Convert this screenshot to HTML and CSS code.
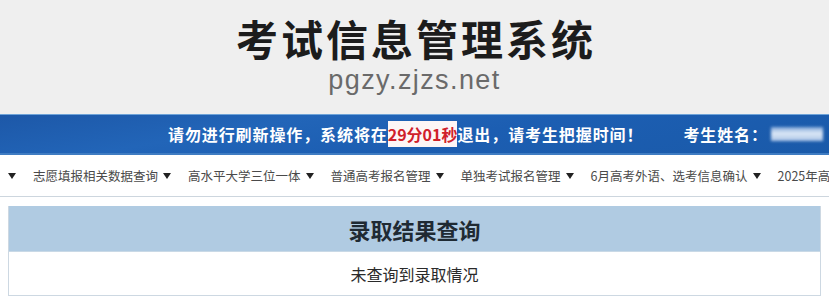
FILE: index.html
```html
<!DOCTYPE html>
<html lang="zh-CN">
<head>
<meta charset="utf-8">
<title>考试信息管理系统</title>
<link rel="stylesheet" href="styles.css">
</head>
<body>
<header class="top">
  <h1 class="title">考试信息管理系统</h1>
  <div class="domain">pgzy.zjzs.net</div>
</header>
<div class="bar">
  <div class="msg">请勿进行刷新操作，系统将在<span class="count">29分01秒</span>退出，请考生把握时间！</div>
  <div class="user">考生姓名：<span class="name"></span></div>
</div>
<nav class="nav">
  <span class="item"><span class="tri"></span></span>
  <span class="item">志愿填报相关数据查询<span class="tri"></span></span>
  <span class="item">高水平大学三位一体<span class="tri"></span></span>
  <span class="item">普通高考报名管理<span class="tri"></span></span>
  <span class="item">单独考试报名管理<span class="tri"></span></span>
  <span class="item">6月高考外语、选考信息确认<span class="tri"></span></span>
  <span class="item">2025年高考成绩查询<span class="tri"></span></span>
</nav>
<section class="result">
  <div class="result-head">录取结果查询</div>
  <div class="result-body">未查询到录取情况</div>
</section>
</body>
</html>
```
FILE: styles.css
```css
html, body {
  margin: 0;
  padding: 0;
}
body {
  background: #ffffff;
  font-family: "Noto Sans CJK SC", "Noto Sans", sans-serif;
  color: #333;
  width: 829px;
  overflow: hidden;
}
.top {
  background: #efefef;
  height: 114px;
  display: flex;
  flex-direction: column;
  align-items: center;
  box-sizing: border-box;
  padding-top: 14px;
}
.title {
  margin: 0;
  font-size: 42px;
  line-height: 48px;
  font-weight: 700;
  letter-spacing: 3px;
  color: #1c1c1c;
  padding-left: 3px;
}
.domain {
  font-family: "Liberation Sans", Arial, sans-serif;
  font-size: 27px;
  line-height: 32px;
  letter-spacing: 1.4px;
  color: #6a6a6a;
  margin-top: 2px;
}
.bar {
  height: 41px;
  box-sizing: border-box;
  background: linear-gradient(170deg, #1d58a8 0%, #2265b8 30%, #1c5eb2 55%, #1a5aa9 100%);
  border-top: 1px solid #6ea3d8;
  border-bottom: 2px solid #3f7cc2;
  display: flex;
  align-items: center;
  padding-left: 168px;
  gap: 40px;
  color: #fff;
  font-weight: 700;
  font-size: 16px;
  letter-spacing: 0.9px;
  white-space: nowrap;
}
.count {
  background: #fdf6f6;
  color: #d0202a;
  padding: 1px 0;
  letter-spacing: 0;
}
.user {
  display: flex;
  align-items: center;
}
.name {
  display: inline-block;
  width: 52px;
  height: 14px;
  margin-left: 3px;
  background: linear-gradient(180deg, #7fa6d8 0%, #dce8f6 45%, #a9c3e6 100%);
  filter: blur(1.5px);
}
.nav {
  height: 42px;
  box-sizing: border-box;
  border-bottom: 1px solid #cdd6de;
  display: flex;
  align-items: center;
  padding-left: 8px;
  gap: 17px;
  white-space: nowrap;
  overflow: hidden;
  font-size: 12.5px;
  color: #4a4a4a;
}
.item {
  display: flex;
  align-items: center;
  flex-shrink: 0;
}
.tri {
  display: inline-block;
  width: 0;
  height: 0;
  border-left: 4.5px solid transparent;
  border-right: 4.5px solid transparent;
  border-top: 6px solid #222;
  margin-left: 5px;
}
.item:first-child .tri {
  margin-left: 0;
}
.result {
  margin: 9px 8px 0;
  border: 1px solid #cdd8e2;
  border-top: none;
}
.result-head {
  height: 45px;
  background: #b0cbe2;
  display: flex;
  align-items: center;
  justify-content: center;
  font-size: 22px;
  font-weight: 700;
  color: #1f2a33;
  border-bottom: 1px solid #c9d9e6;
}
.result-body {
  height: 43px;
  display: flex;
  align-items: center;
  justify-content: center;
  font-size: 16px;
  color: #2a2a2a;
}
```
